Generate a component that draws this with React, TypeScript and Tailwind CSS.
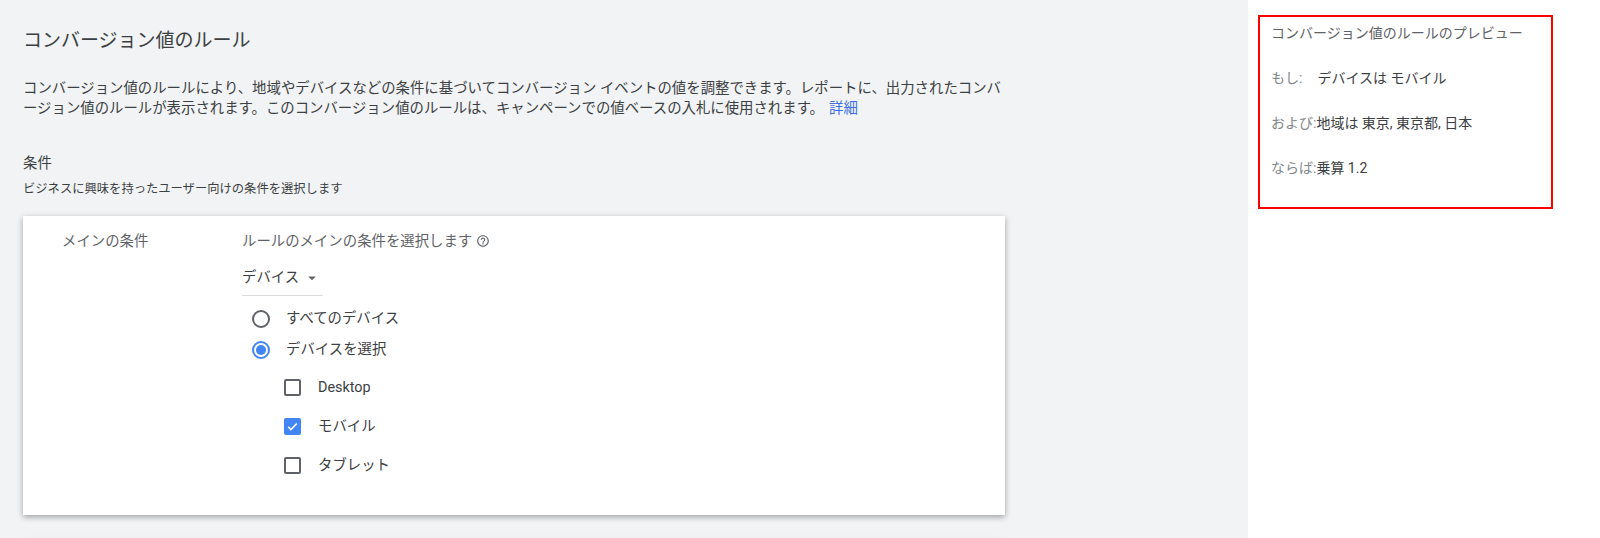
import React from "react";

const FONT = { fontFamily: "Roboto, 'Noto Sans CJK JP', sans-serif" };

const HelpIcon = () => (
  <svg width="14" height="14" viewBox="0 0 24 24" className="fill-[#5f6368] -mt-[3px]">
    <path d="M11 18h2v-2h-2v2zm1-16C6.48 2 2 6.48 2 12s4.48 10 10 10 10-4.48 10-10S17.52 2 12 2zm0 18c-4.41 0-8-3.59-8-8s3.59-8 8-8 8 3.59 8 8-3.59 8-8 8zm0-14c-2.21 0-4 1.79-4 4h2c0-1.1.9-2 2-2s2 .9 2 2c0 2-3 1.75-3 5h2c0-2.25 3-2.5 3-5 0-2.21-1.79-4-4-4z" />
  </svg>
);

const Radio = ({ checked, label }: { checked?: boolean; label: string }) => (
  <div className="flex items-center h-[31px] pl-[10px] gap-[16px]">
    <span
      className={`w-[18px] h-[18px] rounded-full border-2 flex items-center justify-center ${
        checked ? "border-[#4285f4]" : "border-[#5f6368]"
      }`}
    >
      {checked && <span className="w-[10px] h-[10px] rounded-full bg-[#4285f4]" />}
    </span>
    <span className="text-[14.4px] text-[#3c4043]">{label}</span>
  </div>
);

const Check = ({ checked, label }: { checked?: boolean; label: string }) => (
  <div className="flex items-center h-[39px] pl-[42px] gap-[17px]">
    {checked ? (
      <span className="w-[17px] h-[17px] rounded-[2px] bg-[#4285f4] flex items-center justify-center">
        <svg width="13" height="13" viewBox="0 0 24 24">
          <path d="M4 12.5l5 5L20 6.5" fill="none" stroke="white" strokeWidth="3" />
        </svg>
      </span>
    ) : (
      <span className="w-[17px] h-[17px] rounded-[2px] border-2 border-[#5f6368]" />
    )}
    <span className="text-[14.4px] text-[#3c4043]">{label}</span>
  </div>
);

export default function App() {
  return (
    <div className="flex w-[1600px] h-[538px] overflow-hidden" style={FONT}>
      <main className="w-[1248px] bg-[#f1f3f4] pl-[23px] pt-[27px] flex flex-col">
        <h1 className="text-[19px] leading-[28px] text-[#3c4043]">コンバージョン値のルール</h1>
        <div className="mt-[24px] w-[990px] text-[14.4px] leading-[20px] text-[#3c4043]">
          <div>
            コンバージョン値のルールにより、地域やデバイスなどの条件に基づいてコンバージョン イベントの値を調整できます。レポートに、出力されたコンバ
          </div>
          <div className="flex">
            <span>ージョン値のルールが表示されます。このコンバージョン値のルールは、キャンペーンでの値ベースの入札に使用されます。</span>
            <span className="ml-[5px] text-[#3d6fe0]">詳細</span>
          </div>
        </div>
        <div className="mt-[35px] text-[14.4px] leading-[20px] text-[#3c4043]">条件</div>
        <div className="mt-[6px] text-[12.3px] leading-[18px] text-[#3c4043]">
          ビジネスに興味を持ったユーザー向けの条件を選択します
        </div>

        <section className="mt-[18px] w-[982px] h-[299px] shrink-0 bg-white shadow-[0_2px_6px_rgba(0,0,0,0.35)] pt-[16px] flex">
          <div className="w-[219px] pl-[39px] text-[14.4px] leading-[20px] text-[#5f6368]">メインの条件</div>
          <div className="flex flex-col">
            <div className="flex items-center gap-[4px] text-[14.4px] leading-[20px] text-[#5f6368]">
              ルールのメインの条件を選択します
              <HelpIcon />
            </div>
            <div className="mt-[16px] w-[81px] pb-[7px] border-b border-[#dadce0] flex items-center gap-[4px]">
              <span className="text-[14.4px] leading-[20px] text-[#3c4043]">デバイス</span>
              <svg width="18" height="18" viewBox="0 0 24 24" className="fill-[#5f6368]">
                <path d="M7 10l5 5 5-5z" />
              </svg>
            </div>
            <div className="mt-[7px]">
              <Radio label="すべてのデバイス" />
              <Radio checked label="デバイスを選択" />
            </div>
            <div className="mt-[3px]">
              <Check label="Desktop" />
              <Check checked label="モバイル" />
              <Check label="タブレット" />
            </div>
          </div>
        </section>
        <div className="mt-[36px] w-[982px] h-[60px] shrink-0 bg-white shadow-[0_0_16px_rgba(0,0,0,0.2)]" />
      </main>

      <aside className="flex-1 bg-white pl-[10px] pt-[15px]">
        <div className="w-[295px] h-[194px] border-2 border-[#ff0000] pl-[11px] pt-[6px] flex flex-col gap-[25px] text-[14px] leading-[20px]">
          <div className="text-[#5f6368]">コンバージョン値のルールのプレビュー</div>
          <div>
            <span className="text-[#80868b] mr-[15px]">もし:</span>
            <span className="text-[#3c4043]">デバイスは モバイル</span>
          </div>
          <div>
            <span className="text-[#80868b]">および:</span>
            <span className="text-[#3c4043]">地域は 東京, 東京都, 日本</span>
          </div>
          <div>
            <span className="text-[#80868b]">ならば:</span>
            <span className="text-[#3c4043]">乗算 1.2</span>
          </div>
        </div>
      </aside>
    </div>
  );
}
